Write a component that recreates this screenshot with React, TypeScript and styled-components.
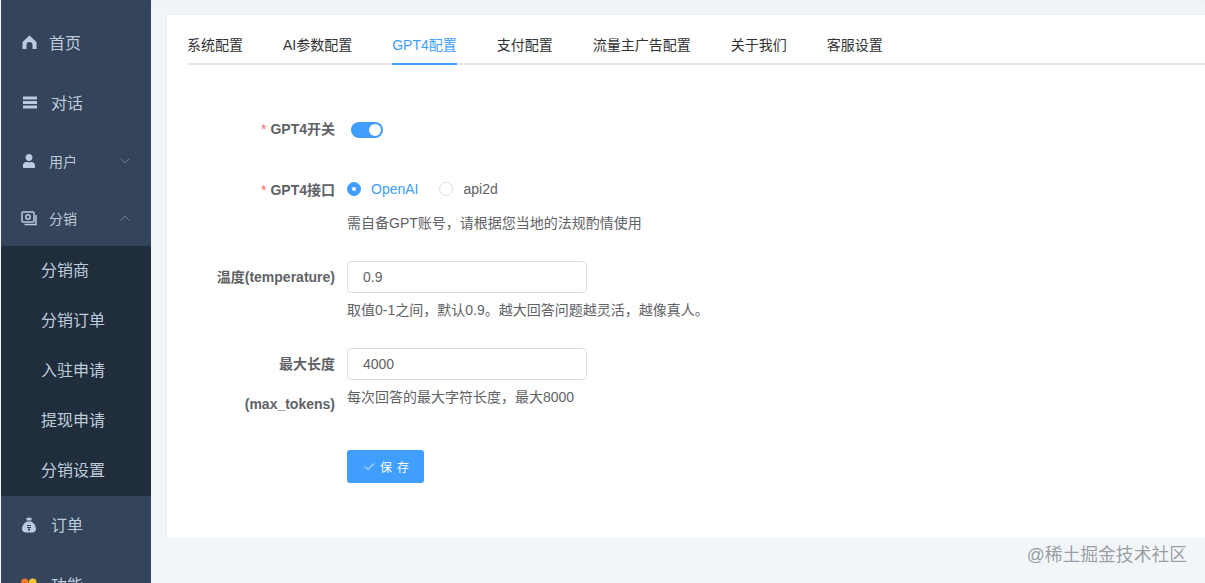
import React from "react";
import styled, { createGlobalStyle } from "styled-components";
import { FaUser } from "react-icons/fa";

const Global = createGlobalStyle`
  html, body { margin: 0; padding: 0; height: 100%; overflow: hidden; background: #f3f6f9; }
  body { font-family: "Liberation Sans", "Noto Sans CJK SC", sans-serif; }
  * { box-sizing: border-box; }
`;

const Page = styled.div`
  position: relative;
  display: flex;
  width: 1205px;
  height: 583px;
  overflow: hidden;
  background: #f3f6f9;
`;

const Sidebar = styled.nav`
  flex: none;
  width: 150px;
  height: 583px;
  margin-left: 1px;
  padding-top: 12px;
  background: #33445b;
  overflow: hidden;
`;

const MenuRow = styled.div<{ $h?: number; $small?: boolean; $gap?: number; $pb?: number }>`
  display: flex;
  align-items: center;
  height: ${(p) => p.$h ?? 60}px;
  padding: 0 20px ${(p) => p.$pb ?? 0}px;
  gap: ${(p) => p.$gap ?? 12}px;
  color: #bfcbd9;
  font-size: ${(p) => (p.$small ? 14 : 16)}px;
`;

const MenuIcon = styled.span`
  flex: none;
  display: flex;
  justify-content: center;
  align-items: center;
  width: 16px;
  height: 16px;
  color: #bccadd;
`;

const Chevron = styled.svg`
  margin-left: auto;
  flex: none;
`;

const SubMenu = styled.div`
  background: #1f2d3d;
`;

const SubItem = styled.div`
  display: flex;
  align-items: center;
  height: 50px;
  padding: 0 0 4px 40px;
  color: #bfcbd9;
  font-size: 16px;
`;

const Main = styled.main`
  flex: 1;
  min-width: 0;
  padding: 14px 0 0 15px;
  background: linear-gradient(#eef2f5, #f3f6f9 14px);
`;

const Card = styled.section`
  width: 1060px;
  height: 525px;
  padding: 10px 20px 0;
  background: #fff;
  border: 1px solid #ebeef5;
`;

const Tabs = styled.div`
  display: flex;
  gap: 40px;
  height: 40px;
  border-bottom: 2px solid #e4e7ed;
`;

const Tab = styled.div<{ $active?: boolean }>`
  height: 40px;
  line-height: 40px;
  font-size: 14px;
  color: ${(p) => (p.$active ? "#409eff" : "#303133")};
  border-bottom: 2px solid ${(p) => (p.$active ? "#409eff" : "transparent")};
  white-space: nowrap;
`;

const Form = styled.div`
  margin-top: 44px;
`;

const Row = styled.div`
  display: grid;
  grid-template-columns: 148px 1fr;
  column-gap: 12px;
  margin-bottom: 21px;
`;

const Label = styled.label`
  text-align: right;
  font-size: 14px;
  font-weight: 700;
  line-height: 40px;
  color: #606266;
`;

const Star = styled.span`
  color: #f56c6c;
  font-weight: 400;
  margin-right: 4px;
`;

const Control = styled.div`
  display: flex;
  align-items: center;
  height: 40px;
`;

const Switch = styled.span`
  position: relative;
  display: block;
  margin: 1px 0 0 4px;
  width: 32px;
  height: 16px;
  border-radius: 8px;
  background: #409eff;
  &::after {
    content: "";
    position: absolute;
    top: 2px;
    right: 2px;
    width: 12px;
    height: 12px;
    border-radius: 50%;
    background: #fff;
  }
`;

const RadioItem = styled.span<{ $on?: boolean }>`
  display: inline-flex;
  align-items: center;
  gap: 10px;
  margin-right: 21px;
  margin-top: -2px;
  font-size: 14px;
  color: ${(p) => (p.$on ? "#409eff" : "#606266")};
`;

const RadioDot = styled.span<{ $on?: boolean }>`
  width: 14px;
  height: 14px;
  border-radius: 50%;
  background: ${(p) => (p.$on ? "#409eff" : "#fff")};
  border: 1px solid ${(p) => (p.$on ? "#409eff" : "#dcdfe6")};
  display: flex;
  align-items: center;
  justify-content: center;
  &::after {
    content: "";
    width: 4px;
    height: 4px;
    border-radius: 50%;
    background: #fff;
  }
`;

const Help = styled.div`
  font-size: 14px;
  line-height: 26px;
  color: #606266;
  white-space: nowrap;
`;

const Input = styled.input`
  width: 240px;
  height: 32px;
  padding: 0 15px;
  border: 1px solid #dcdfe6;
  border-radius: 4px;
  outline: none;
  background: #fff;
  font-family: inherit;
  font-size: 14px;
  color: #606266;
`;

const SaveButton = styled.button`
  display: inline-flex;
  align-items: center;
  gap: 5px;
  width: 77px;
  height: 33px;
  margin-top: 2px;
  padding: 0 0 0 17px;
  border: none;
  border-radius: 3px;
  background: #409eff;
  color: #fff;
  font-family: inherit;
  font-size: 12px;
  letter-spacing: 5px;
  white-space: nowrap;
`;

const Watermark = styled.div`
  position: absolute;
  right: 18px;
  top: 544px;
  font-size: 17.8px;
  line-height: 22px;
  color: rgba(70, 80, 90, 0.55);
  white-space: nowrap;
`;

const ChevronIcon = ({ up }: { up?: boolean }) => (
  <Chevron width="12" height="8" viewBox="0 0 12 8" fill="none" stroke="#6f7f94" strokeWidth="1">
    <path d={up ? "M1.5 6.5 6 2l4.5 4.5" : "M1.5 1.5 6 6l4.5-4.5"} />
  </Chevron>
);

const HomeIcon = () => (
  <svg width="15" height="14" viewBox="0 0 15 14" fill="#bccadd">
    <path d="M7.5.5 14.5 7v7h-4V10a3 3 0 0 0-6 0v4h-4V7L7.5.5Z" />
  </svg>
);

const BarsIcon = () => (
  <svg width="15" height="13" viewBox="0 0 15 13" fill="#bccadd">
    <rect x="1" y="0.5" width="14" height="3" />
    <rect x="1" y="5" width="14" height="3" />
    <rect x="1" y="9.5" width="14" height="3" />
  </svg>
);

const CashIcon = () => (
  <svg width="16" height="15" viewBox="0 0 16 15" fill="none" stroke="#bccadd" strokeWidth="1.5">
    <rect x="1" y="1" width="12" height="10" rx="1" />
    <circle cx="7" cy="6" r="2.2" />
    <path d="M15 4v9.5H3.5" />
  </svg>
);

const BagIcon = () => (
  <svg width="16" height="17" viewBox="0 0 16 17" fill="#bccadd">
    <path d="M5 1.5 6.6 2.4 8 .8l1.4 1.6L11 1.5 10.2 4.6H5.8L5 1.5Z" />
    <path d="M5.6 5.6h4.8C13 7.5 15 10.2 15 13c0 2.4-1.8 3.4-3.6 3.4H4.6C2.8 16.4 1 15.4 1 13c0-2.8 2-5.5 4.6-7.4Z" />
    <path d="M6 9h4v1H6zM6 11h4v1H6zM7 12.5h2v2H7z" fill="#33445b" />
  </svg>
);

const DotsIcon = () => (
  <svg width="17" height="16" viewBox="0 0 17 16" style={{ marginTop: 4 }}>
    <circle cx="4" cy="4" r="4" fill="#f0752f" />
    <circle cx="12.5" cy="4" r="4" fill="#f7c531" />
    <circle cx="4" cy="12.5" r="4" fill="#3fb86b" />
    <circle cx="12.5" cy="12.5" r="4" fill="#4a90e2" />
  </svg>
);

const subItems = ["分销商", "分销订单", "入驻申请", "提现申请", "分销设置"];
const tabs = ["系统配置", "AI参数配置", "GPT4配置", "支付配置", "流量主广告配置", "关于我们", "客服设置"];

export default function App() {
  return (
    <Page>
      <Global />
      <Sidebar>
        <MenuRow>
          <MenuIcon><HomeIcon /></MenuIcon>
          首页
        </MenuRow>
        <MenuRow $gap={14}>
          <MenuIcon><BarsIcon /></MenuIcon>
          对话
        </MenuRow>
        <MenuRow $h={58} $small>
          <MenuIcon><FaUser size={14} /></MenuIcon>
          用户
          <ChevronIcon />
        </MenuRow>
        <MenuRow $h={56} $small>
          <MenuIcon><CashIcon /></MenuIcon>
          分销
          <ChevronIcon up />
        </MenuRow>
        <SubMenu>
          {subItems.map((s) => <SubItem key={s}>{s}</SubItem>)}
        </SubMenu>
        <MenuRow $gap={14} $pb={4}>
          <MenuIcon><BagIcon /></MenuIcon>
          订单
        </MenuRow>
        <MenuRow $gap={14} $pb={4}>
          <MenuIcon><DotsIcon /></MenuIcon>
          功能
        </MenuRow>
      </Sidebar>
      <Main>
        <Card>
          <Tabs>
            {tabs.map((t) => <Tab key={t} $active={t === "GPT4配置"}>{t}</Tab>)}
          </Tabs>
          <Form>
            <Row>
              <Label><Star>*</Star>GPT4开关</Label>
              <Control><Switch /></Control>
            </Row>
            <Row>
              <Label><Star>*</Star>GPT4接口</Label>
              <div>
                <Control>
                  <RadioItem $on><RadioDot $on />OpenAI</RadioItem>
                  <RadioItem><RadioDot />api2d</RadioItem>
                </Control>
                <Help>需自备GPT账号，请根据您当地的法规酌情使用</Help>
              </div>
            </Row>
            <Row>
              <Label>温度(temperature)</Label>
              <div>
                <Control><Input readOnly value="0.9" /></Control>
                <Help>取值0-1之间，默认0.9。越大回答问题越灵活，越像真人。</Help>
              </div>
            </Row>
            <Row>
              <Label>最大长度<br />(max_tokens)</Label>
              <div>
                <Control><Input readOnly value="4000" /></Control>
                <Help>每次回答的最大字符长度，最大8000</Help>
              </div>
            </Row>
            <Row>
              <span />
              <Control>
                <SaveButton>
                  <svg width="11" height="9" viewBox="0 0 11 9" fill="none" stroke="#fff" strokeWidth="1">
                    <path d="M1 4.5 4 7.5 10 1.5" />
                  </svg>
                  保存
                </SaveButton>
              </Control>
            </Row>
          </Form>
        </Card>
      </Main>
      <Watermark>@稀土掘金技术社区</Watermark>
    </Page>
  );
}
